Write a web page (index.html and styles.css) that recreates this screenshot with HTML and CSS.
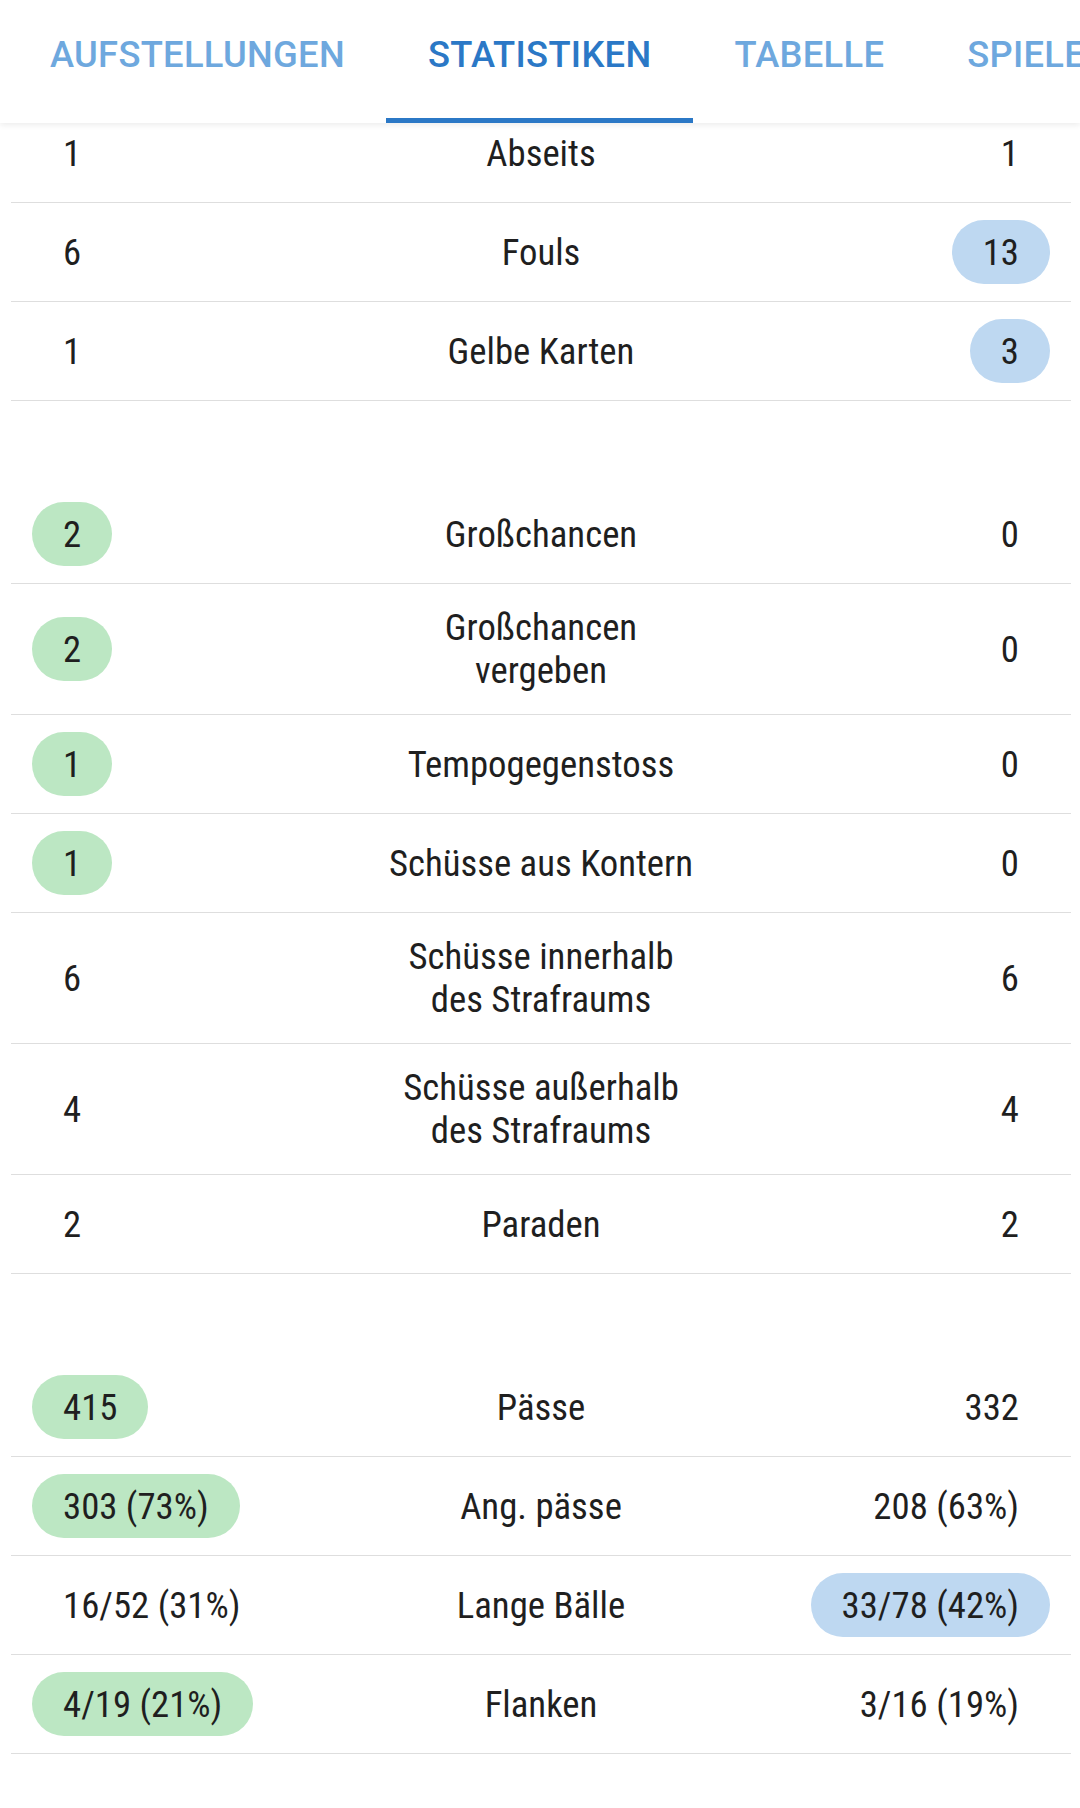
FILE: index.html
```html
<!DOCTYPE html>
<html lang="de">

<head>
  <meta charset="UTF-8" />
  <title>Statistiken</title>
  <meta name="viewport" content="width=device-width, initial-scale=1.0" />
  <link rel="stylesheet" href="styles.css">
</head>

<body>

  <nav class="tabs">
    <div class="tab">Aufstellungen</div>
    <div class="tab active">Statistiken</div>
    <div class="tab">Tabelle</div>
    <div class="tab">Spiele</div>
  </nav>

  <main class="stats">
    <section class="group first">
      <div class="row"><span class="val">1</span><span class="label">Abseits</span><span class="val">1</span></div>
      <div class="row"><span class="val">6</span><span class="label">Fouls</span><span class="val away">13</span></div>
      <div class="row"><span class="val">1</span><span class="label">Gelbe Karten</span><span class="val away">3</span></div>
    </section>

    <section class="group">
      <div class="row"><span class="val home">2</span><span class="label">Großchancen</span><span class="val">0</span></div>
      <div class="row"><span class="val home">2</span><span class="label">Großchancen vergeben</span><span class="val">0</span></div>
      <div class="row"><span class="val home">1</span><span class="label">Tempogegenstoss</span><span class="val">0</span></div>
      <div class="row"><span class="val home">1</span><span class="label">Schüsse aus Kontern</span><span class="val">0</span></div>
      <div class="row"><span class="val">6</span><span class="label">Schüsse innerhalb des Strafraums</span><span class="val">6</span></div>
      <div class="row"><span class="val">4</span><span class="label">Schüsse außerhalb des Strafraums</span><span class="val">4</span></div>
      <div class="row"><span class="val">2</span><span class="label">Paraden</span><span class="val">2</span></div>
    </section>

    <section class="group">
      <div class="row"><span class="val home">415</span><span class="label">Pässe</span><span class="val">332</span></div>
      <div class="row"><span class="val home">303 (73%)</span><span class="label">Ang. pässe</span><span class="val">208 (63%)</span></div>
      <div class="row"><span class="val">16/52 (31%)</span><span class="label">Lange Bälle</span><span class="val away">33/78 (42%)</span></div>
      <div class="row"><span class="val home">4/19 (21%)</span><span class="label">Flanken</span><span class="val">3/16 (19%)</span></div>
    </section>
  </main>

</body>

</html>
```

FILE: styles.css
```css
/* ─── BASE ───────────────────────────────────────────────────────── */
* {
  box-sizing: border-box;
  margin: 0;
  padding: 0;
}

html,
body {
  background: #fff;
  color: #1f1f1f;
  font-family: Roboto, "Noto Sans", sans-serif;
  overflow: hidden;
}

/* ─── TABS ───────────────────────────────────────────────────────── */
.tabs {
  position: relative;
  z-index: 2;
  display: flex;
  height: 123px;
  padding-left: 8.5px;
  background: #fff;
  box-shadow: 0 2px 6px rgba(0, 0, 0, 0.08);
  white-space: nowrap;
  overflow: hidden;
}

.tab {
  flex: none;
  height: 100%;
  padding: 31px 41.5px 0;
  font-size: 36.3px;
  font-weight: 500;
  letter-spacing: 0.3px;
  line-height: 48px;
  text-transform: uppercase;
  color: #6ea8de;
  border-bottom: 5px solid transparent;
}

.tab.active {
  color: #2b78c6;
  border-bottom-color: #2b78c6;
}

/* ─── STAT LIST ──────────────────────────────────────────────────── */
.stats {
  padding: 0 9px 0 11px;
}

.group + .group {
  margin-top: 84px;
}

.group.first {
  margin-top: -19px;
}

.row {
  display: grid;
  grid-template-columns: 1fr 320px 1fr;
  align-items: center;
  min-height: 99px;
  padding: 22px 21px;
  border-bottom: 1.5px solid #dedede;
  font-size: 36.75px;
  font-stretch: 87.5%;
}

.label {
  text-align: center;
}

.val {
  justify-self: start;
  margin: -10.5px 0;
  padding: 10.5px 31px;
  border-radius: 32px;
}

.val:last-child {
  justify-self: end;
}

.val.home {
  background: #bce7c3;
}

.val.away {
  background: #bed8f1;
}
```
